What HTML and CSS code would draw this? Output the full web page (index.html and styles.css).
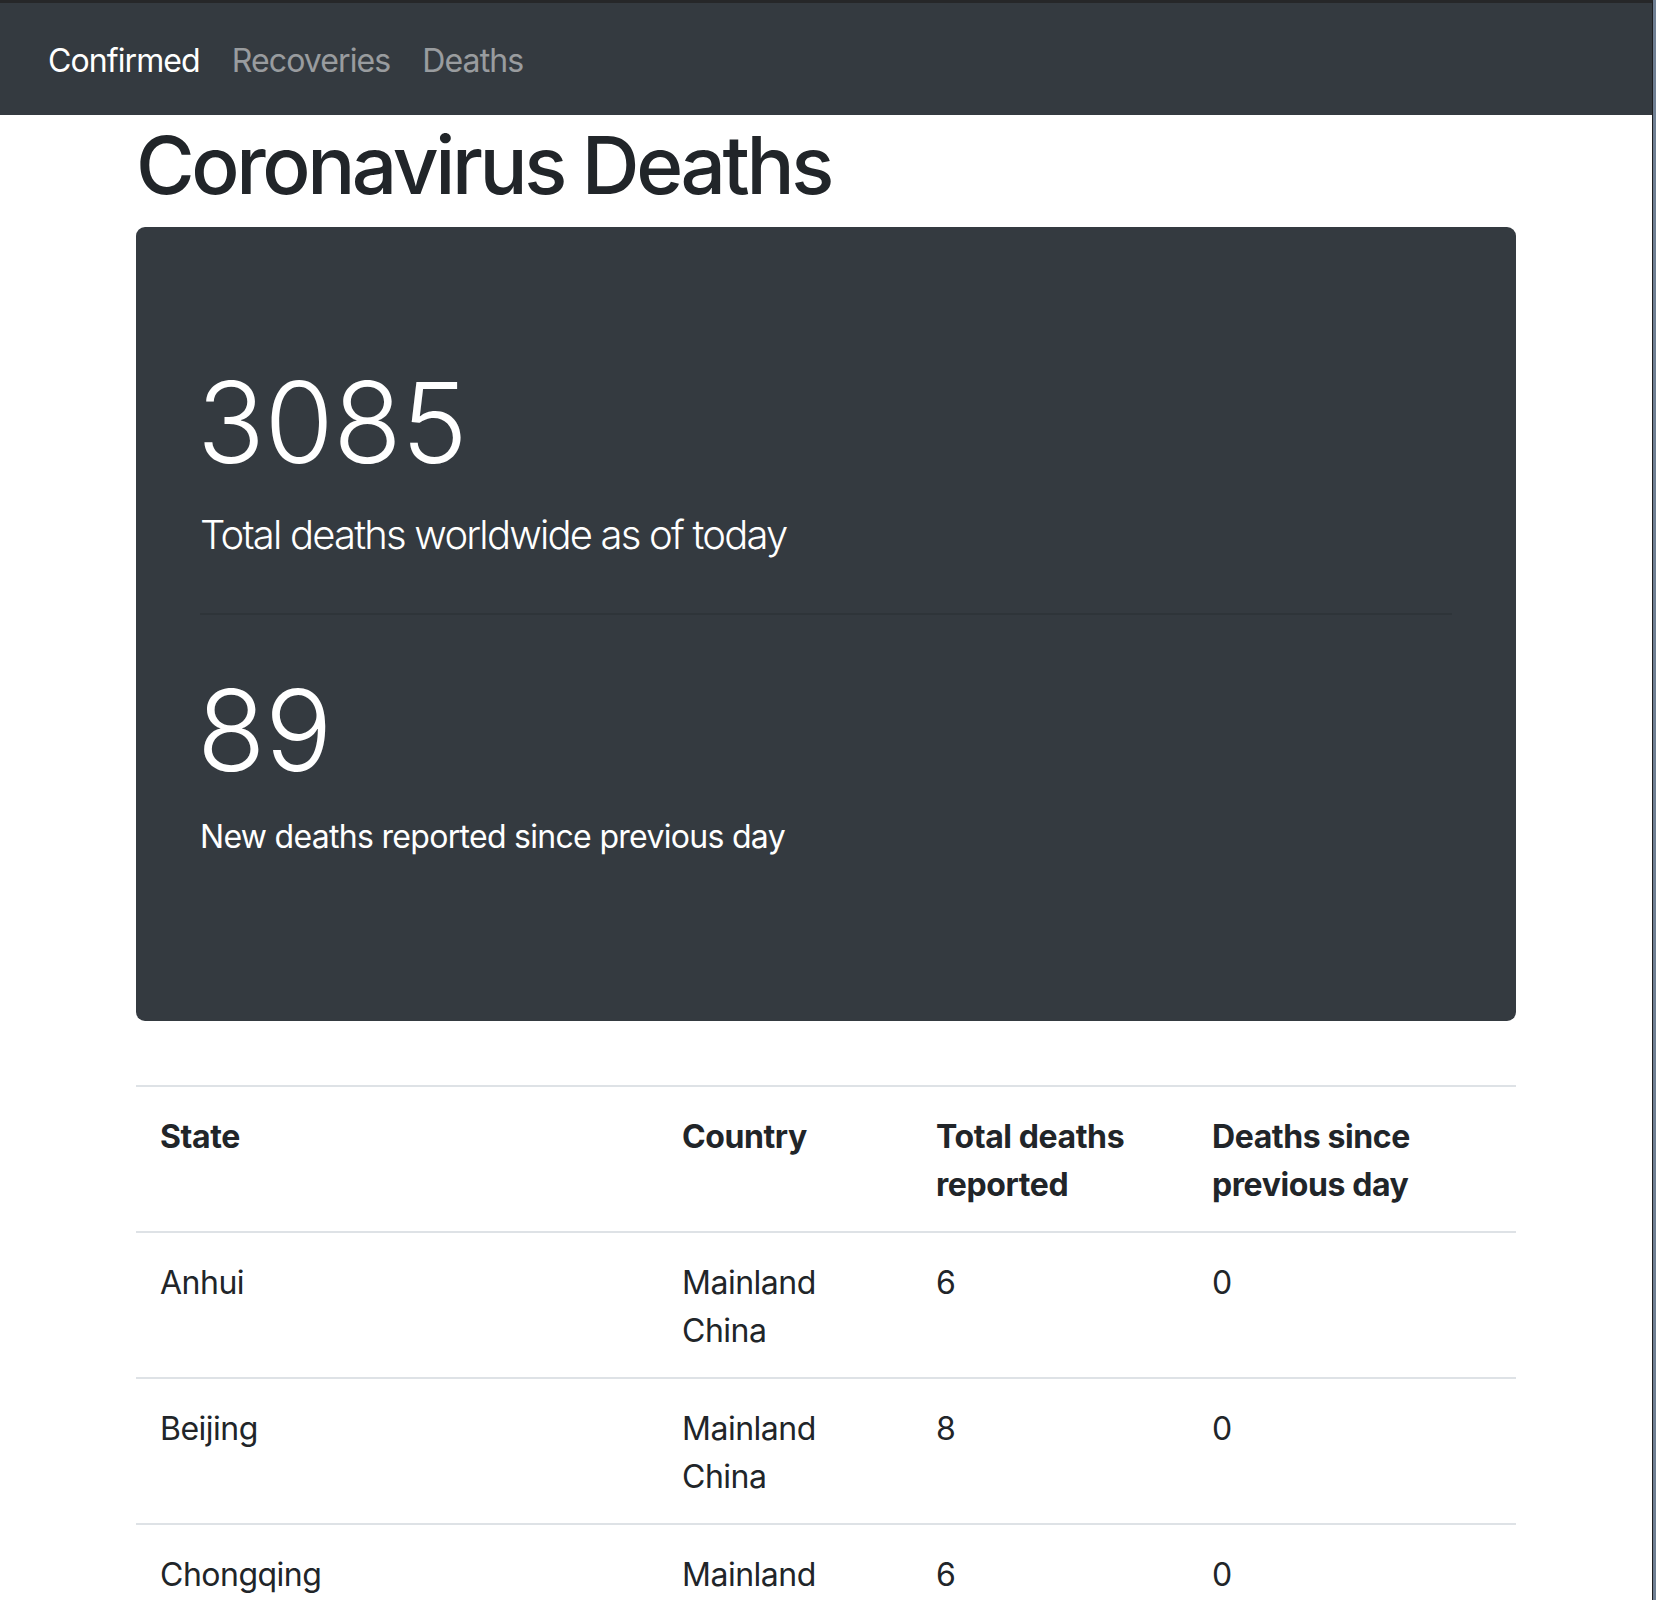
FILE: index.html
```html
<!DOCTYPE html>
<html lang="en">
<head>
<meta charset="utf-8">
<title>Coronavirus Deaths</title>
<link rel="stylesheet" href="styles.css">
</head>
<body>
<div class="window">
  <nav class="navbar">
    <a class="nav-link active" href="#">Confirmed</a>
    <a class="nav-link" href="#">Recoveries</a>
    <a class="nav-link" href="#">Deaths</a>
  </nav>
  <main class="container">
    <h1 class="title">Coronavirus Deaths</h1>
    <section class="jumbotron">
      <h2 class="display">3085</h2>
      <p class="lead">Total deaths worldwide as of today</p>
      <hr class="divider">
      <h2 class="display">89</h2>
      <p class="sub">New deaths reported since previous day</p>
    </section>
    <table class="table">
      <thead>
        <tr>
          <th class="c1">State</th>
          <th class="c2">Country</th>
          <th class="c3">Total deaths reported</th>
          <th class="c4">Deaths since previous day</th>
        </tr>
      </thead>
      <tbody>
        <tr><td>Anhui</td><td>Mainland China</td><td>6</td><td>0</td></tr>
        <tr><td>Beijing</td><td>Mainland China</td><td>8</td><td>0</td></tr>
        <tr><td>Chongqing</td><td>Mainland China</td><td>6</td><td>0</td></tr>
      </tbody>
    </table>
  </main>
</div>
</body>
</html>
```
FILE: styles.css
```css
html {
  background: #6f7f93;
}
body {
  margin: 0;
  font-family: Inter, "Noto Sans", "Liberation Sans", sans-serif;
  color: #212529;
}
.window {
  width: 1653px;
  min-height: 1600px;
  background: #fff;
  border-top: 3px solid #262729;
  border-right: 1px solid #1e1f21;
  box-sizing: border-box;
}
.navbar {
  display: flex;
  align-items: center;
  background: #343a40;
  padding: 16px 32px;
  height: 112px;
  box-sizing: border-box;
}
.nav-link {
  display: block;
  padding: 10px 16px 6px;
  font-size: 32px;
  line-height: 48px;
  letter-spacing: -0.9px;
  color: rgba(255, 255, 255, 0.5);
  text-decoration: none;
}
.nav-link.active {
  color: #fff;
}
.container {
  width: 1380px;
  margin: 0 auto;
  padding: 0 30px;
  box-sizing: content-box;
}
.title {
  margin: 0 0 16px;
  padding-top: 2px;
  height: 94px;
  font-size: 80px;
  line-height: 96px;
  font-weight: 500;
  letter-spacing: -3.4px;
}
.jumbotron {
  background: #343a40;
  color: #fff;
  border-radius: 9px;
  padding: 128px 64px;
  margin-bottom: 64px;
}
.display {
  margin: 0 0 16px;
  font-size: 112px;
  line-height: 134px;
  font-weight: 300;
  letter-spacing: -0.4px;
  text-indent: -3px;
}
.lead {
  margin: 0 0 32px;
  font-size: 40px;
  line-height: 60px;
  font-weight: 300;
  letter-spacing: -1.8px;
}
.divider {
  margin: 48px 0;
  border: 0;
  border-top: 2px solid rgba(0, 0, 0, 0.1);
}
.sub {
  margin: 0 0 32px;
  font-size: 32px;
  line-height: 48px;
  font-weight: 400;
  letter-spacing: -0.7px;
}
.table {
  width: 100%;
  border-collapse: collapse;
  table-layout: fixed;
  font-size: 32px;
  line-height: 48px;
  letter-spacing: -0.5px;
}
.table th,
.table td {
  padding: 26px 24px 22px;
  text-align: left;
  vertical-align: top;
  border-top: 2px solid #dee2e6;
}
.table th {
  font-weight: 700;
  letter-spacing: -0.4px;
  border-bottom: 2px solid #dee2e6;
}
.c1 { width: 474px; }
.c2 { width: 206px; }
.c3 { width: 228px; }
.c4 { width: 280px; }
```
